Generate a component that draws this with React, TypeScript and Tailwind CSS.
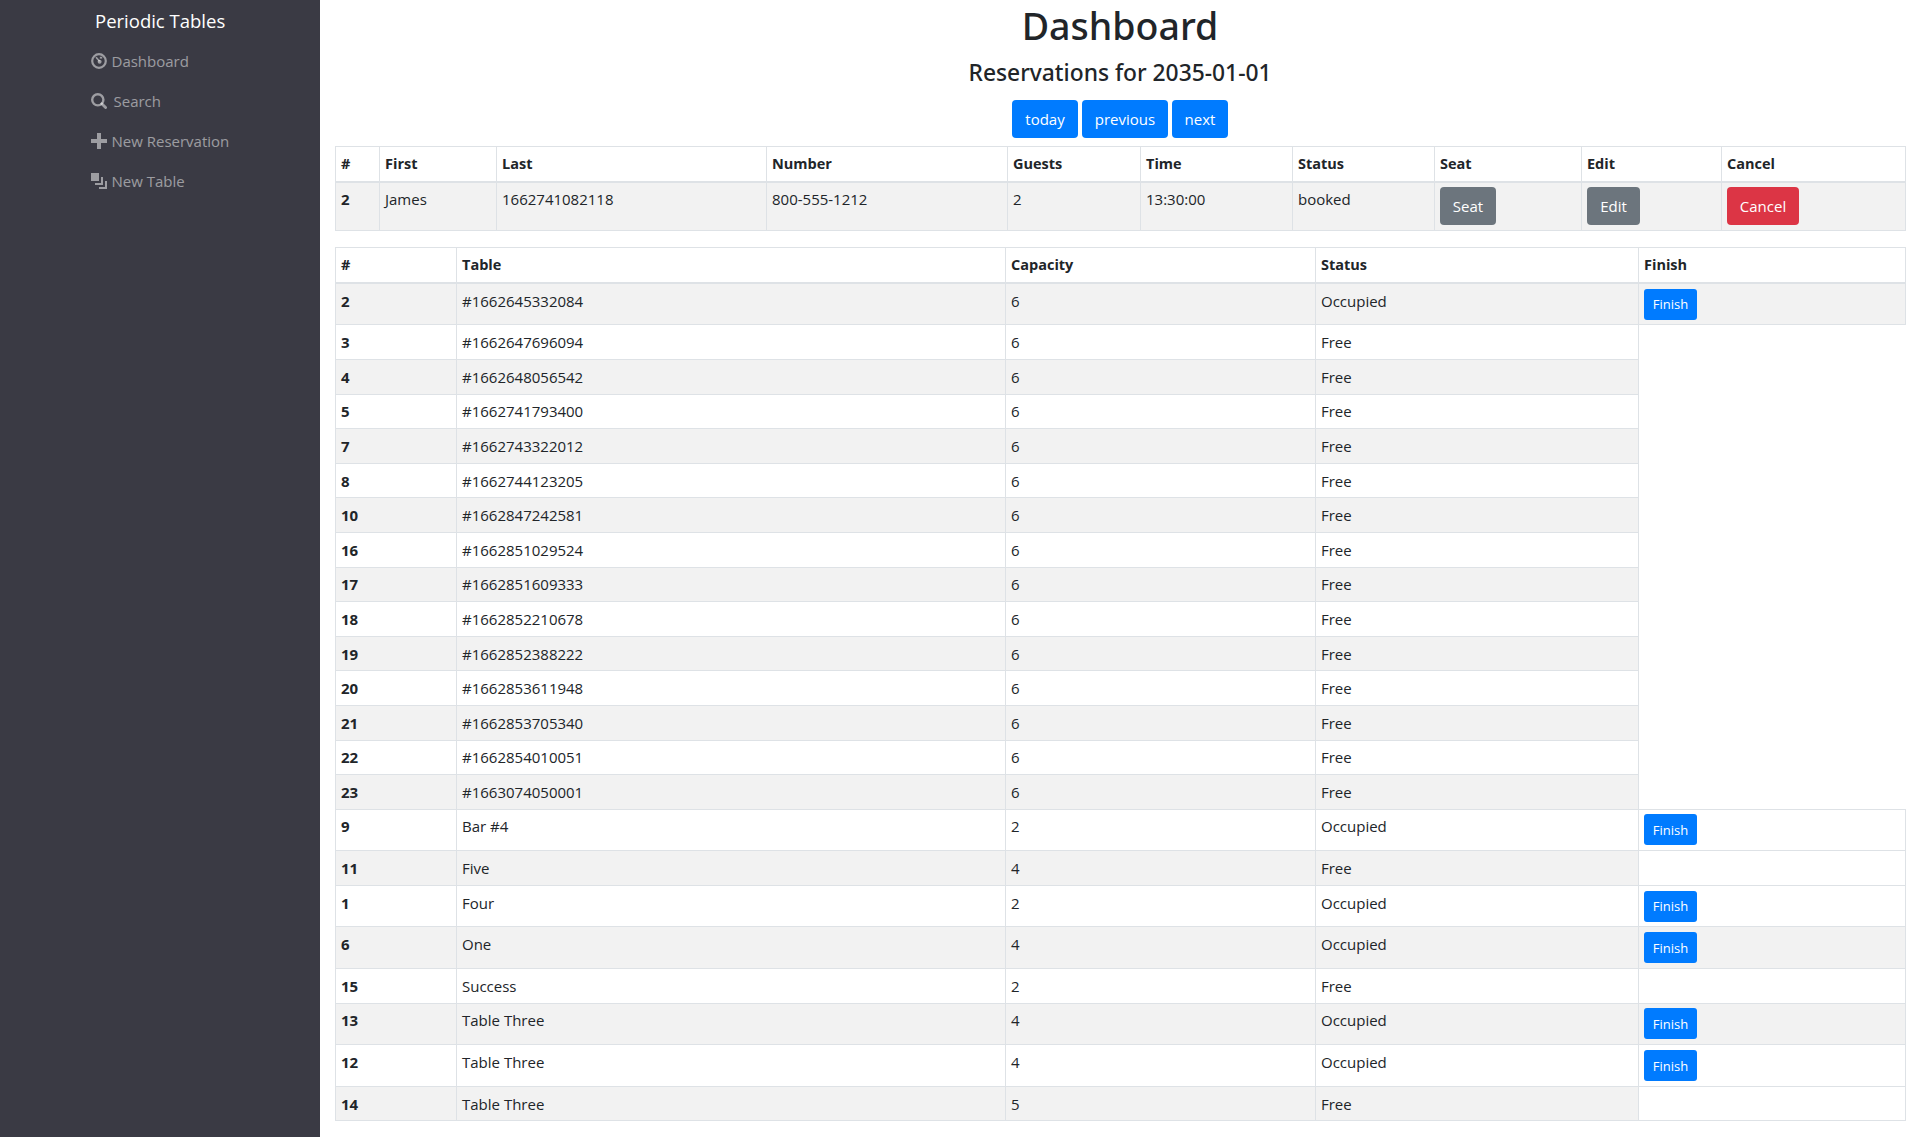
import type { ReactNode } from "react";

const reservationHead = ["#", "First", "Last", "Number", "Guests", "Time", "Status", "Seat", "Edit", "Cancel"];

const tables: [string, string, number, string][] = [
  ["2", "#1662645332084", 6, "Occupied"],
  ["3", "#1662647696094", 6, "Free"],
  ["4", "#1662648056542", 6, "Free"],
  ["5", "#1662741793400", 6, "Free"],
  ["7", "#1662743322012", 6, "Free"],
  ["8", "#1662744123205", 6, "Free"],
  ["10", "#1662847242581", 6, "Free"],
  ["16", "#1662851029524", 6, "Free"],
  ["17", "#1662851609333", 6, "Free"],
  ["18", "#1662852210678", 6, "Free"],
  ["19", "#1662852388222", 6, "Free"],
  ["20", "#1662853611948", 6, "Free"],
  ["21", "#1662853705340", 6, "Free"],
  ["22", "#1662854010051", 6, "Free"],
  ["23", "#1663074050001", 6, "Free"],
  ["9", "Bar #4", 2, "Occupied"],
  ["11", "Five", 4, "Free"],
  ["1", "Four", 2, "Occupied"],
  ["6", "One", 4, "Occupied"],
  ["15", "Success", 2, "Free"],
  ["13", "Table Three", 4, "Occupied"],
  ["12", "Table Three", 4, "Occupied"],
  ["14", "Table Three", 5, "Free"],
];

const th = "border border-[#dee2e6] border-b-2 px-[5px] pt-[5.3px] pb-[4.3px] text-left font-bold text-[14.5px] leading-6";
const td = "border border-[#dee2e6] px-[5px] py-[4.8px] align-top text-[15px] leading-6";

function Icon({ children }: { children: ReactNode }) {
  return (
    <svg viewBox="0 0 8 8" className="h-4 w-4 shrink-0" fill="currentColor" stroke="none">
      {children}
    </svg>
  );
}

function NavItem({ icon, label, gap }: { icon: ReactNode; label: string; gap: string }) {
  return (
    <a className={`flex h-10 items-center ${gap} text-[15px] text-white/50`}>
      <Icon>{icon}</Icon>
      <span>{label}</span>
    </a>
  );
}

function Sidebar() {
  return (
    <div className="w-80 shrink-0 bg-[#3a3a44]">
      <div className="pl-[91px]">
        <div className="h-[41px] pl-1 pt-[7px] text-[18.5px] leading-7 text-white">Periodic Tables</div>
        <NavItem
          gap="gap-[4.5px]"
          label="Dashboard"
          icon={
            <>
              <circle cx="4" cy="4" r="3.4" fill="none" stroke="currentColor" strokeWidth="1.1" />
              <circle cx="4.3" cy="4.4" r="1" />
              <path d="M2.2 2.4l.6-.5 1.8 2-.6.5z" />
              <path d="M4.4 1.9h1.2v.9h-1.2z" />
            </>
          }
        />
        <NavItem
          gap="gap-[6.5px]"
          label="Search"
          icon={
            <>
              <circle cx="3.4" cy="3.4" r="2.8" fill="none" stroke="currentColor" strokeWidth="1.2" />
              <path d="M5.4 5.4l1.9 1.9" fill="none" stroke="currentColor" strokeWidth="1.4" strokeLinecap="round" />
            </>
          }
        />
        <NavItem gap="gap-[4.5px]" label="New Reservation" icon={<path d="M3 0v3h-3v2h3v3h2v-3h3v-2h-3v-3h-2z" />} />
        <NavItem
          gap="gap-[4.5px]"
          label="New Table"
          icon={<path d="M0 0v4h4v-4h-4zm5 2v3h-3v1h4v-4h-1zm2 2v3h-3v1h4v-4h-1z" />}
        />
      </div>
    </div>
  );
}

function ReservationTable() {
  const widths = ["w-[44px]", "w-[117px]", "w-[270px]", "w-[241px]", "w-[133px]", "w-[152px]", "w-[142px]", "w-[147px]", "w-[140px]", "w-[184px]"];
  return (
    <table className="mb-4 w-full table-fixed border-collapse text-[#212529]">
      <colgroup>
        {widths.map((w) => (
          <col key={w} className={w} />
        ))}
      </colgroup>
      <thead>
        <tr>
          {reservationHead.map((h) => (
            <th key={h} className={th}>{h}</th>
          ))}
        </tr>
      </thead>
      <tbody>
        <tr className="bg-[#f2f2f2]">
          <td className={`${td} font-bold`}>2</td>
          <td className={td}>James</td>
          <td className={td}>1662741082118</td>
          <td className={td}>800-555-1212</td>
          <td className={td}>2</td>
          <td className={td}>13:30:00</td>
          <td className={td}>booked</td>
          <td className={td}>
            <button className="block h-[38px] w-[56px] rounded bg-[#6c757d] text-[15px] text-white">Seat</button>
          </td>
          <td className={td}>
            <button className="block h-[38px] w-[53px] rounded bg-[#6c757d] text-[15px] text-white">Edit</button>
          </td>
          <td className={td}>
            <button className="block h-[38px] w-[72px] rounded bg-[#dc3545] text-[15px] text-white">Cancel</button>
          </td>
        </tr>
      </tbody>
    </table>
  );
}

function TablesTable() {
  return (
    <table className="w-full table-fixed border-collapse text-[#212529]">
      <colgroup>
        <col className="w-[121px]" />
        <col className="w-[549px]" />
        <col className="w-[310px]" />
        <col className="w-[323px]" />
        <col className="w-[267px]" />
      </colgroup>
      <thead>
        <tr>
          <th className={th}>#</th>
          <th className={th}>Table</th>
          <th className={th}>Capacity</th>
          <th className={th}>Status</th>
          <th className={th}>Finish</th>
        </tr>
      </thead>
      <tbody>
        {tables.map(([id, name, capacity, status], i) => (
          <tr key={id} className={i % 2 === 0 ? "bg-[#f2f2f2]" : ""}>
            <td className={`${td} font-bold`}>{id}</td>
            <td className={td}>{name}</td>
            <td className={td}>{capacity}</td>
            <td className={td}>{status}</td>
            {status === "Occupied" ? (
              <td className={td}>
                <button className="block h-[31px] w-[53px] rounded-[3px] bg-[#007bff] text-[13px] text-white">Finish</button>
              </td>
            ) : null}
            {status === "Free" && i > 14 ? <td className={`${td} bg-white`} /> : null}
          </tr>
        ))}
      </tbody>
    </table>
  );
}

export default function App() {
  return (
    <div className="flex min-h-screen bg-white font-['Open_Sans',sans-serif]">
      <Sidebar />
      <main className="min-w-0 flex-1 px-[15px]">
        <h1 className="mt-[2px] mb-2 text-center font-['Noto_Sans',sans-serif] text-[37.5px] leading-[48px] font-medium text-[#212529]">Dashboard</h1>
        <h4 className="mb-[13px] text-center font-['Noto_Sans',sans-serif] text-[22.8px] leading-[29px] font-medium text-[#212529]">Reservations for 2035-01-01</h4>
        <div className="mb-2 flex justify-center gap-1">
          <button className="h-[38px] w-[66px] rounded bg-[#007bff] text-[15px] text-white">today</button>
          <button className="h-[38px] w-[86px] rounded bg-[#007bff] text-[15px] text-white">previous</button>
          <button className="h-[38px] w-[56px] rounded bg-[#007bff] text-[15px] text-white">next</button>
        </div>
        <ReservationTable />
        <TablesTable />
      </main>
    </div>
  );
}
